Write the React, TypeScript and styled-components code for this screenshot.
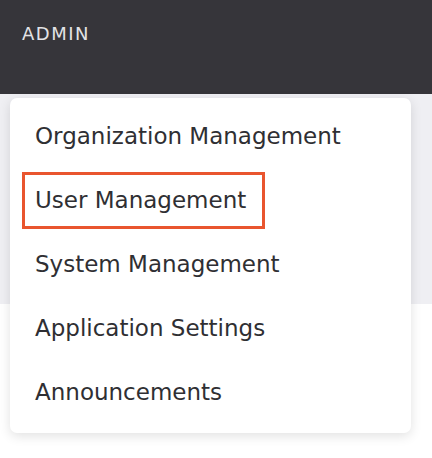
import { FC } from 'react';
import styled, { createGlobalStyle } from 'styled-components';

const GlobalStyle = createGlobalStyle`
  body {
    margin: 0;
    background: #ffffff;
    font-family: 'DejaVu Sans', sans-serif;
  }
`;

const items = [
  'Organization Management',
  'User Management',
  'System Management',
  'Application Settings',
  'Announcements',
];

const App: FC = () => {
  return (
    <>
      <GlobalStyle />
      <Header>
        <HeaderTitle>ADMIN</HeaderTitle>
      </Header>
      <Body>
        <Menu>
          {items.map((label) => (
            <MenuItem key={label} $active={label === 'User Management'}>
              {label}
            </MenuItem>
          ))}
        </Menu>
      </Body>
    </>
  );
};

export default App;

const Header = styled.header`
  height: 94px;
  background: #36353a;
  padding: 22px 22px 0;
  box-sizing: border-box;
`;

const HeaderTitle = styled.h1`
  margin: 0;
  font-family: 'DejaVu Sans', sans-serif;
  font-weight: 400;
  font-size: 18px;
  line-height: 24px;
  letter-spacing: 1.5px;
  color: #e3e3e6;
`;

const Body = styled.div`
  background: linear-gradient(#efeff3 0, #efeff3 210px, #ffffff 210px);
  padding: 4px 21px 24px 10px;
`;

const Menu = styled.nav`
  display: flex;
  flex-direction: column;
  align-items: flex-start;
  background: #ffffff;
  border-radius: 7px;
  box-shadow: 0 3px 12px rgba(0, 0, 0, 0.12);
  padding: 6px 0 9px;
`;

const MenuItem = styled.a<{ $active?: boolean }>`
  display: flex;
  align-items: center;
  height: 57px;
  box-sizing: border-box;
  margin: 3.5px 12px;
  padding: 0 16px 0 10px;
  border: 3px solid ${(p) => (p.$active ? '#e9552e' : 'transparent')};
  font-family: 'DejaVu Sans', sans-serif;
  font-weight: 400;
  font-size: 23px;
  color: #2f2f33;
  cursor: pointer;
  white-space: nowrap;
`;
